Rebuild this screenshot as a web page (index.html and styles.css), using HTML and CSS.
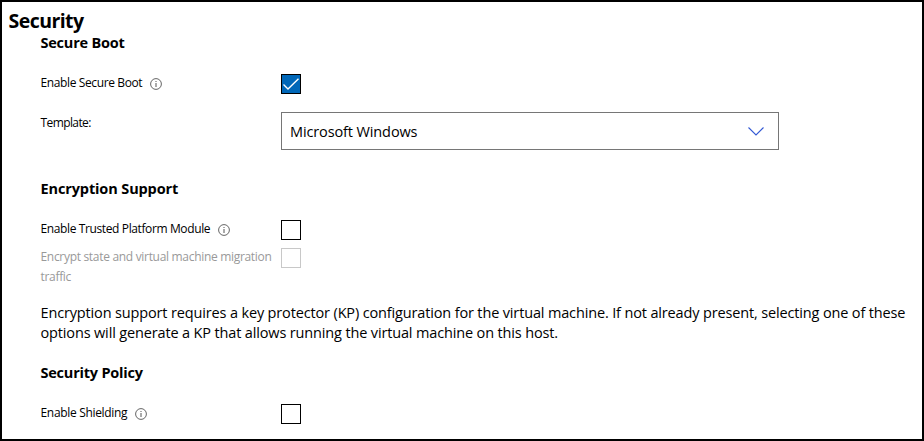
FILE: index.html
```html
<!DOCTYPE html>
<html lang="en">
<head>
<meta charset="utf-8">
<title>Security</title>
<link rel="stylesheet" href="styles.css">
</head>
<body>
<svg class="defs" aria-hidden="true">
  <symbol id="info" viewBox="0 0 12 12">
    <circle cx="6" cy="6" r="5.4" fill="none" stroke="#555" stroke-width="0.9"/>
    <path d="M6 5v4M6 3v1" stroke="#555" stroke-width="1" fill="none"/>
  </symbol>
</svg>
<main class="page">
  <h1>Security</h1>
  <section class="secure-boot">
    <h2>Secure Boot</h2>
    <div class="row">
      <label for="boot"><span>Enable Secure Boot</span><svg class="info"><use href="#info"/></svg></label>
      <div id="boot" class="check checked" role="checkbox" aria-checked="true">
        <svg viewBox="0 0 18 18"><path d="M1.5 9.5l4.5 4.5L16.5 3.8" fill="none" stroke="#fff" stroke-width="1.4"/></svg>
      </div>
    </div>
    <div class="row template">
      <label><span>Template:</span></label>
      <div class="select" role="combobox">
        <span class="value">Microsoft Windows</span>
        <svg class="chevron" viewBox="0 0 16 9"><path d="M.5.5L8 8L15.5.5" fill="none" stroke="#3359d4" stroke-width="1.1"/></svg>
      </div>
    </div>
  </section>
  <section class="encryption">
    <h2>Encryption Support</h2>
    <div class="row">
      <label for="tpm"><span>Enable Trusted Platform Module</span><svg class="info"><use href="#info"/></svg></label>
      <div id="tpm" class="check" role="checkbox" aria-checked="false"></div>
    </div>
    <div class="row disabled">
      <label for="traffic"><span>Encrypt state and virtual machine migration<br>traffic</span></label>
      <div id="traffic" class="check" role="checkbox" aria-checked="false"></div>
    </div>
    <p>Encryption support requires a key protector (KP) configuration for the virtual machine. If not already present, selecting one of these<br>options will generate a KP that allows running the virtual machine on this host.</p>
  </section>
  <section class="policy">
    <h2>Security Policy</h2>
    <div class="row">
      <label for="shield"><span>Enable Shielding</span><svg class="info"><use href="#info"/></svg></label>
      <div id="shield" class="check" role="checkbox" aria-checked="false"></div>
    </div>
  </section>
</main>
</body>
</html>
```
FILE: styles.css
```css
* { box-sizing: border-box; }
body { margin: 0; background: #fff; color: #000; font-family: "Segoe UI", "Open Sans", "Noto Sans", sans-serif; }
.defs { display: none; }
.page { width: 924px; height: 441px; border: 2px solid #000; padding: 7px 0 0 6.5px; overflow: hidden; }
h1 { margin: 0; font-size: 19.5px; line-height: 24px; font-weight: 700; letter-spacing: -0.55px; }
section { padding-left: 32px; }
h2 { margin: 0 0 20px; font-size: 14.5px; line-height: 20px; font-weight: 700; letter-spacing: -0.22px; white-space: nowrap; }
.encryption h2 { letter-spacing: -0.12px; }
.row { display: grid; grid-template-columns: 240.5px 498px; align-items: start; font-size: 12px; line-height: 20px; }
label { display: flex; align-items: center; white-space: nowrap; letter-spacing: -0.38px; }
.info { width: 12px; height: 12px; margin: 1px 0 0 8px; flex: none; }
.check { width: 20px; height: 20px; margin-top: 1px; border: 1px solid #000; }
.check svg { display: block; width: 18px; height: 18px; }
.checked { background: #0067b8; }
.template { margin-top: 18px; }
.template label { padding-top: 1px; letter-spacing: -0.6px; }
.select { display: flex; align-items: center; justify-content: space-between; height: 38px; border: 1px solid #767676; padding: 0 14px 0 8px; font-size: 14.5px; letter-spacing: -0.12px; }
.value { padding-top: 2px; }
.chevron { width: 16px; height: 9px; }
.encryption { margin-top: 29px; }
.disabled { margin-top: 7px; color: #999; }
.disabled label { letter-spacing: -0.31px; }
.disabled .check { border-color: #c8c8c8; }
.policy label { letter-spacing: -0.32px; }
p { margin: 16px 0 20px; font-size: 14.5px; line-height: 20px; letter-spacing: -0.148px; white-space: nowrap; }
```
